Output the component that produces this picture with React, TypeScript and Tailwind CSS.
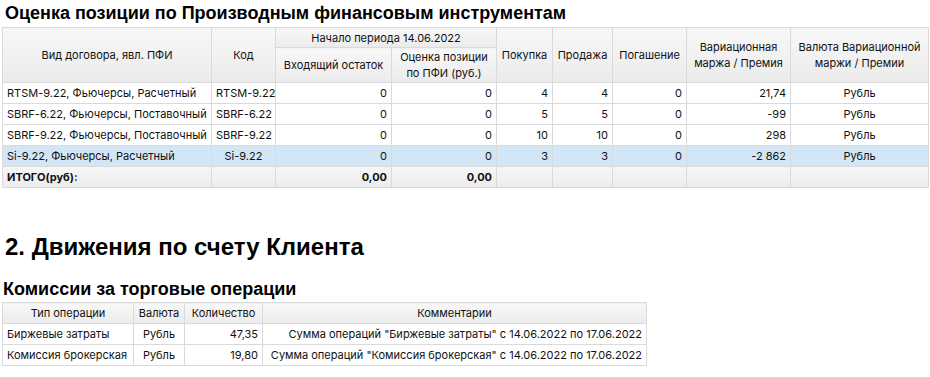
const bodyFont = { fontFamily: 'Inter, Tahoma, sans-serif' };
const headFont = { fontFamily: '"Liberation Sans", Arial, sans-serif' };

type Row = {
  name: string;
  code: string;
  rest: string;
  value: string;
  buy: string;
  sell: string;
  redeem: string;
  margin: string;
  currency: string;
  active?: boolean;
};

const rows: Row[] = [
  { name: "RTSM-9.22, Фьючерсы, Расчетный", code: "RTSM-9.22", rest: "0", value: "0", buy: "4", sell: "4", redeem: "0", margin: "21,74", currency: "Рубль" },
  { name: "SBRF-6.22, Фьючерсы, Поставочный", code: "SBRF-6.22", rest: "0", value: "0", buy: "5", sell: "5", redeem: "0", margin: "-99", currency: "Рубль" },
  { name: "SBRF-9.22, Фьючерсы, Поставочный", code: "SBRF-9.22", rest: "0", value: "0", buy: "10", sell: "10", redeem: "0", margin: "298", currency: "Рубль" },
  { name: "Si-9.22, Фьючерсы, Расчетный", code: "Si-9.22", rest: "0", value: "0", buy: "3", sell: "3", redeem: "0", margin: "-2 862", currency: "Рубль", active: true },
];

const fees = [
  { type: "Биржевые затраты", cur: "Рубль", qty: "47,35", note: 'Сумма операций "Биржевые затраты" с 14.06.2022 по 17.06.2022' },
  { type: "Комиссия брокерская", cur: "Рубль", qty: "19,80", note: 'Сумма операций "Комиссия брокерская" с 14.06.2022 по 17.06.2022' },
];

const th = "border border-[#dadada] bg-gradient-to-b from-[#f8f8f8] to-[#ebebeb] font-normal text-center px-[3px] leading-[16px]";
const td = "border border-[#dadada] px-[4px] h-[21px] whitespace-nowrap";

export default function App() {
  return (
    <div className="bg-white text-[11px] text-[#111] px-[2px] w-[930px] h-[377px] overflow-hidden" style={bodyFont}>
      <h1 className="h-[27px] leading-[27px] text-[18px] font-bold pl-[3px] text-black" style={headFont}>
        Оценка позиции по Производным финансовым инструментам
      </h1>
      <table className="table-fixed border-collapse w-[926px]">
        <colgroup>
          <col className="w-[209px]" />
          <col className="w-[64px]" />
          <col className="w-[116px]" />
          <col className="w-[105px]" />
          <col className="w-[56px]" />
          <col className="w-[60px]" />
          <col className="w-[74px]" />
          <col className="w-[104px]" />
          <col className="w-[138px]" />
        </colgroup>
        <thead>
          <tr className="h-[20px]">
            <th rowSpan={2} className={th}>Вид договора, явл. ПФИ</th>
            <th rowSpan={2} className={th}>Код</th>
            <th colSpan={2} className={th}>Начало периода 14.06.2022</th>
            <th rowSpan={2} className={th}>Покупка</th>
            <th rowSpan={2} className={th}>Продажа</th>
            <th rowSpan={2} className={th}>Погашение</th>
            <th rowSpan={2} className={th}>Вариационная маржа / Премия</th>
            <th rowSpan={2} className={th}>Валюта Вариационной маржи / Премии</th>
          </tr>
          <tr className="h-[35px]">
            <th className={`${th} whitespace-nowrap`}>Входящий остаток</th>
            <th className={th}>Оценка позиции по ПФИ (руб.)</th>
          </tr>
        </thead>
        <tbody>
          {rows.map((r) => (
            <tr key={r.code} className={r.active ? "bg-[#d2e6f5]" : "bg-white"}>
              <td className={td}>{r.name}</td>
              <td className={`${td} text-center`}>{r.code}</td>
              <td className={`${td} text-right`}>{r.rest}</td>
              <td className={`${td} text-right`}>{r.value}</td>
              <td className={`${td} text-right`}>{r.buy}</td>
              <td className={`${td} text-right`}>{r.sell}</td>
              <td className={`${td} text-right`}>{r.redeem}</td>
              <td className={`${td} text-right`}>{r.margin}</td>
              <td className={`${td} text-center`}>{r.currency}</td>
            </tr>
          ))}
          <tr className="bg-gradient-to-b from-[#f6f6f6] to-[#ececec] font-bold">
            <td className={td}>ИТОГО(руб):</td>
            <td className={td}></td>
            <td className={`${td} text-right`}>0,00</td>
            <td className={`${td} text-right`}>0,00</td>
            <td className={td}></td>
            <td className={td}></td>
            <td className={td}></td>
            <td className={td}></td>
            <td className={td}></td>
          </tr>
        </tbody>
      </table>

      <h2 className="mt-[43px] h-[32px] leading-[32px] text-[24px] font-bold pl-[3px] text-black" style={headFont}>
        2. Движения по счету Клиента
      </h2>
      <h3 className="mt-[13px] h-[26px] leading-[26px] text-[18px] font-bold pl-[1px] text-black" style={headFont}>
        Комиссии за торговые операции
      </h3>
      <table className="table-fixed border-collapse w-[644px]">
        <colgroup>
          <col className="w-[131px]" />
          <col className="w-[51px]" />
          <col className="w-[78px]" />
          <col className="w-[384px]" />
        </colgroup>
        <thead>
          <tr className="h-[21px]">
            <th className={th}>Тип операции</th>
            <th className={th}>Валюта</th>
            <th className={th}>Количество</th>
            <th className={th}>Комментарии</th>
          </tr>
        </thead>
        <tbody>
          {fees.map((f) => (
            <tr key={f.type}>
              <td className={td}>{f.type}</td>
              <td className={`${td} text-center`}>{f.cur}</td>
              <td className={`${td} text-right`}>{f.qty}</td>
              <td className={`${td} text-right`}>{f.note}</td>
            </tr>
          ))}
        </tbody>
      </table>
    </div>
  );
}
